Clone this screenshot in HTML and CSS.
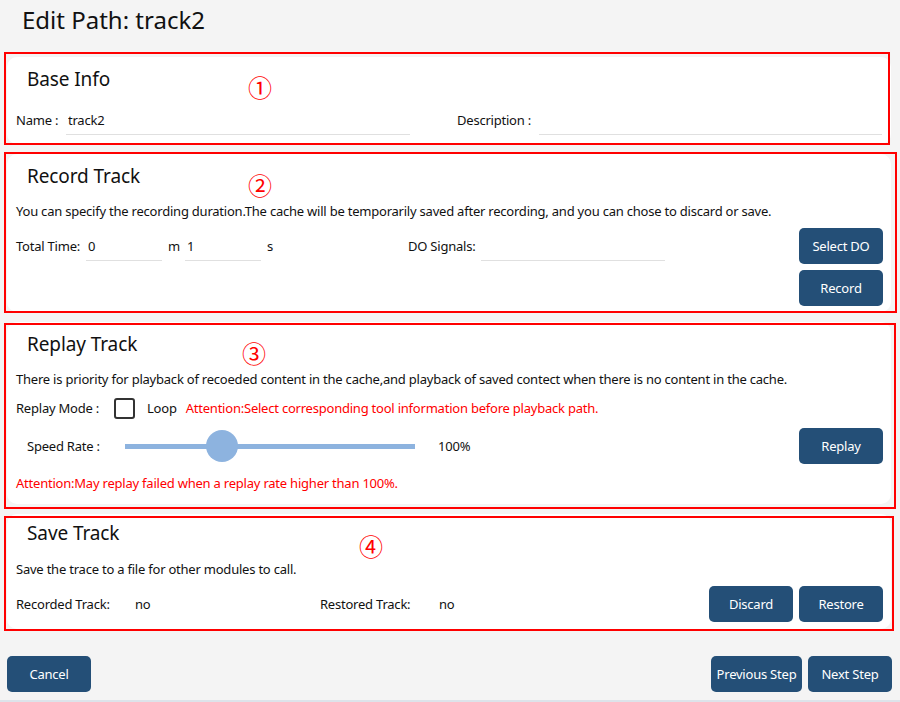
FILE: index.html
```html
<!DOCTYPE html>
<html lang="en">
<head>
    <meta charset="UTF-8">
    <meta name="viewport" content="width=device-width, initial-scale=1.0">
    <title>Edit Path</title>
    <link rel="stylesheet" href="styles.css">
</head>
<body>
    <div class="page">
        <h1 class="page-title">Edit Path: track2</h1>

        <!-- Base info -->
        <section class="card card-base">
            <div class="mark mark-1"></div>
            <span class="mark-num num-1">①</span>
            <h2 class="card-title">Base Info</h2>
            <div class="base-row">
                <label class="field">
                    <span class="label name-label">Name :</span>
                    <input class="line-input name-input" type="text" value="track2">
                </label>
                <label class="field">
                    <span class="label desc-label">Description :</span>
                    <input class="line-input desc-input" type="text" value="">
                </label>
            </div>
        </section>

        <!-- Record track -->
        <section class="card card-record">
            <div class="mark mark-2"></div>
            <span class="mark-num num-2">②</span>
            <h2 class="card-title">Record Track</h2>
            <p class="card-text">You can specify the recording duration.The cache will be temporarily saved after recording, and you can chose to discard or save.</p>
            <div class="record-body">
                <div class="record-fields">
                    <span class="label time-label">Total Time:</span>
                    <input class="line-input time-input" type="text" value="0">
                    <span class="unit">m</span>
                    <input class="line-input time-input" type="text" value="1">
                    <span class="unit">s</span>
                    <span class="label do-label">DO Signals:</span>
                    <input class="line-input do-input" type="text" value="">
                </div>
                <div class="btn-col">
                    <button class="btn">Select DO</button>
                    <button class="btn">Record</button>
                </div>
            </div>
        </section>

        <!-- Replay track -->
        <section class="card card-replay">
            <div class="mark mark-3"></div>
            <span class="mark-num num-3">③</span>
            <h2 class="card-title">Replay Track</h2>
            <p class="card-text">There is priority for playback of recoeded content in the cache,and playback of saved contect when there is no content in the cache.</p>
            <div class="mode-row">
                <span class="label mode-label">Replay Mode :</span>
                <span class="checkbox"></span>
                <span class="loop-label">Loop</span>
                <span class="warn">Attention:Select corresponding tool information before playback path.</span>
            </div>
            <div class="speed-row">
                <span class="label speed-label">Speed Rate :</span>
                <div class="slider">
                    <div class="slider-track"></div>
                    <div class="slider-thumb" style="left: 81px;"></div>
                </div>
                <span class="speed-value">100%</span>
                <button class="btn push-right">Replay</button>
            </div>
            <p class="warn warn-line">Attention:May replay failed when a replay rate higher than 100%.</p>
        </section>

        <!-- Save track -->
        <section class="card card-save">
            <div class="mark mark-4"></div>
            <span class="mark-num num-4">④</span>
            <h2 class="card-title">Save Track</h2>
            <p class="card-text">Save the trace to a file for other modules to call.</p>
            <div class="save-row">
                <span class="label saved-label">Recorded Track:</span>
                <span class="saved-value">no</span>
                <span class="label saved-label">Restored Track:</span>
                <span class="saved-value">no</span>
                <div class="btn-pair push-right">
                    <button class="btn">Discard</button>
                    <button class="btn">Restore</button>
                </div>
            </div>
        </section>

        <div class="footer">
            <button class="btn">Cancel</button>
            <div class="btn-pair push-right">
                <button class="btn btn-wide">Previous Step</button>
                <button class="btn">Next Step</button>
            </div>
        </div>
    </div>
    <div class="bottom-line"></div>
</body>
</html>
```

FILE: styles.css
```css
/* Page */
body {
    margin: 0;
    background-color: #f4f4f4;
    color: #111;
    font-family: 'Noto Sans', 'Open Sans', sans-serif;
    font-size: 13px;
    letter-spacing: -0.22px;
}

.page {
    padding: 0 9px 0 7px;
}

.page-title {
    margin: 0 0 17px 0;
    padding-left: 15px;
    height: 40px;
    line-height: 40px;
    font-size: 24px;
    font-weight: normal;
    letter-spacing: 0;
    color: #111;
}

/* Cards */
.card {
    position: relative;
    background-color: #fff;
    border-radius: 10px;
    padding: 10px 8px 0 9px;
    margin-bottom: 10px;
}

.card-title {
    margin: 0;
    padding-left: 11px;
    height: 24px;
    line-height: 24px;
    font-size: 19px;
    font-weight: normal;
    letter-spacing: -0.1px;
    color: #111;
}

.card-text {
    margin: 13px 0 0 0;
    line-height: 20px;
    height: 20px;
    white-space: nowrap;
}

.label {
    white-space: nowrap;
}

/* Red annotation boxes */
.mark {
    position: absolute;
    border: 2px solid #ff0000;
    box-sizing: border-box;
    pointer-events: none;
}

.mark-1 { left: -3px; top: -5px; width: 886px; height: 93px; }
.mark-2 { left: -3px; top: -2px; width: 893px; height: 161px; }
.mark-3 { left: -3px; top: 1px; width: 892px; height: 186px; }
.mark-4 { left: -3px; top: 2px; width: 890px; height: 115px; }

.mark-num {
    position: absolute;
    color: #ff0000;
    font-family: 'Noto Sans CJK SC', 'DejaVu Sans', sans-serif;
    font-size: 24px;
    line-height: 24px;
    letter-spacing: 0;
}

.num-1 { left: 241px; top: 18px; }
.num-2 { left: 241px; top: 19px; }
.num-3 { left: 235px; top: 19px; }
.num-4 { left: 352px; top: 20px; }

/* Inputs */
.line-input {
    height: 30px;
    box-sizing: border-box;
    border: none;
    border-bottom: 1px solid #e0e0e0;
    background: transparent;
    padding: 0 2px;
    font-family: inherit;
    font-size: 13px;
    letter-spacing: inherit;
    color: #111;
    outline: none;
}

.field {
    display: flex;
    align-items: center;
}

/* Base info */
.card-base {
    height: 77px;
}

.base-row {
    display: flex;
    align-items: center;
    margin-top: 14px;
    height: 30px;
}

.name-label { width: 50px; }
.name-input { width: 344px; }
.desc-label { width: 82px; margin-left: 47px; }
.desc-input { width: 343px; }

/* Record track */
.card-record {
    height: 148px;
}

.record-body {
    display: flex;
    align-items: flex-start;
    margin-top: 7px;
}

.record-fields {
    display: flex;
    align-items: center;
    height: 36px;
    flex: 1;
}

.time-label { width: 70px; }
.time-input { width: 76px; }
.unit { width: 23px; padding-left: 6px; box-sizing: border-box; }
.do-label { width: 73px; margin-left: 124px; }
.do-input { width: 184px; }

.btn-col {
    display: flex;
    flex-direction: column;
    gap: 6px;
}

/* Buttons */
.btn {
    width: 84px;
    height: 36px;
    border: none;
    border-radius: 5px;
    background-color: #244f77;
    color: #fff;
    font-family: inherit;
    font-size: 13px;
    letter-spacing: inherit;
    padding: 0;
    cursor: pointer;
}

.btn-wide {
    width: 91px;
}

.btn-pair {
    display: flex;
    gap: 6px;
}

.push-right {
    margin-left: auto;
}

/* Replay track */
.card-replay {
    height: 172px;
}

.mode-row {
    display: flex;
    align-items: center;
    margin-top: 8px;
    height: 22px;
}

.mode-label {
    width: 98px;
}

.checkbox {
    width: 21px;
    height: 21px;
    box-sizing: border-box;
    border: 2px solid #333;
    border-radius: 3px;
}

.loop-label {
    margin-left: 12px;
    margin-right: 9px;
}

.warn {
    color: #ff0000;
    white-space: nowrap;
}

.speed-row {
    display: flex;
    align-items: center;
    margin-top: 9px;
    height: 36px;
}

.speed-label {
    width: 109px;
    padding-left: 11px;
    box-sizing: border-box;
}

.slider {
    position: relative;
    width: 290px;
    height: 32px;
}

.slider-track {
    position: absolute;
    left: 0;
    right: 0;
    top: 14px;
    height: 5px;
    background-color: #8db3df;
}

.slider-thumb {
    position: absolute;
    top: 0;
    width: 32px;
    height: 32px;
    border-radius: 50%;
    background-color: #8db3df;
}

.speed-value {
    margin-left: 23px;
}

.warn-line {
    margin: 9px 0 0 0;
    line-height: 20px;
}

/* Save track */
.card-save {
    padding-top: 7px;
    height: 108px;
}

.card-save .card-text {
    margin-top: 14px;
}

.save-row {
    display: flex;
    align-items: center;
    margin-top: 7px;
    height: 36px;
}

.saved-label { width: 119px; }
.saved-value { width: 185px; }

/* Footer */
.footer {
    display: flex;
    margin-top: 27px;
    margin-right: -1px;
}

.bottom-line {
    position: fixed;
    left: 0;
    right: 0;
    bottom: 0;
    height: 2px;
    background-color: #dde3ea;
}
```
